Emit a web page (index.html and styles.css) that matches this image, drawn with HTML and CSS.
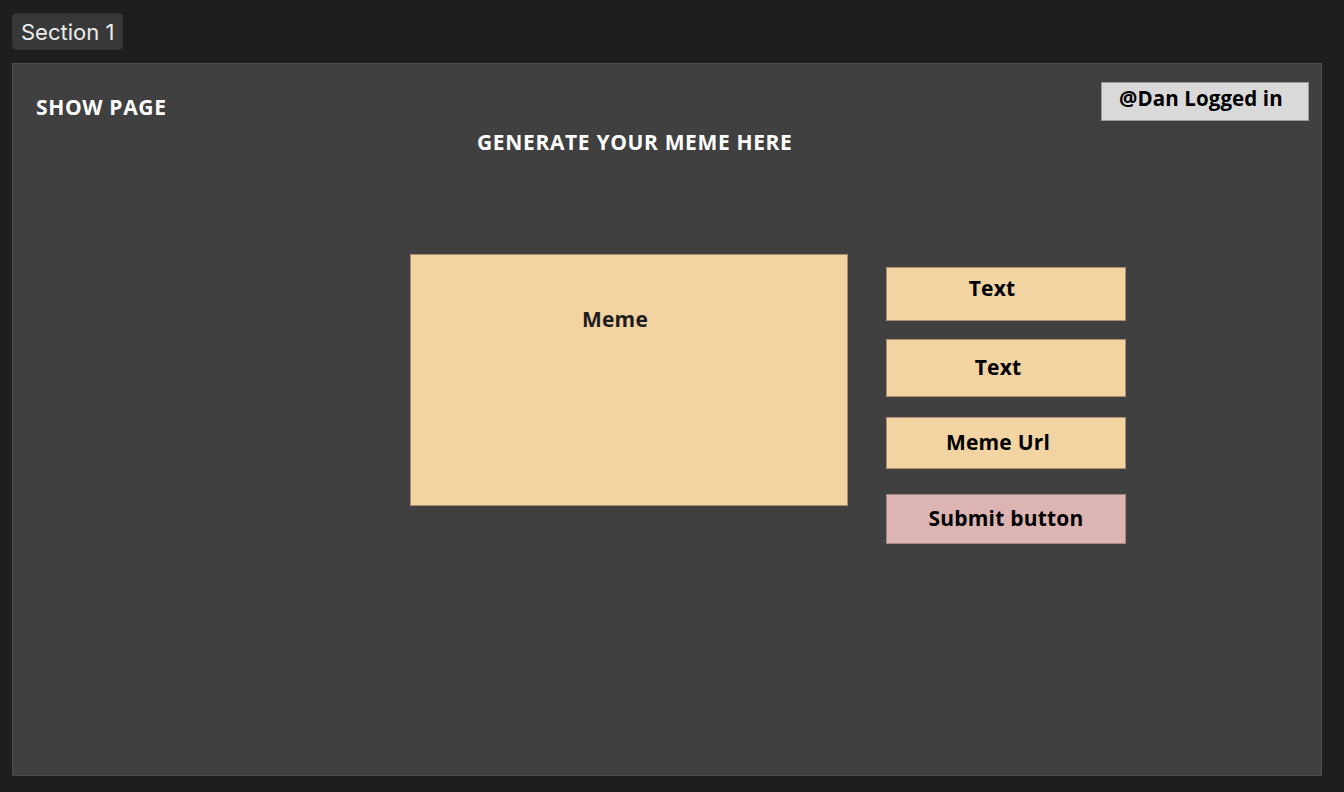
FILE: index.html
```html
<!DOCTYPE html>
<html>
<head>
<meta charset="utf-8">
<link rel="stylesheet" href="styles.css">
</head>
<body>
<div class="tab">Section 1</div>
<div class="frame">
  <div class="header">
    <div class="title">SHOW PAGE</div>
    <div class="badge">@Dan Logged in</div>
  </div>
  <div class="subtitle">GENERATE YOUR MEME HERE</div>
  <div class="content">
    <div class="meme"><span class="meme-label">Meme</span></div>
    <div class="fields">
      <div class="field f1">Text</div>
      <div class="field f2">Text</div>
      <div class="field f3">Meme Url</div>
      <div class="field submit">Submit button</div>
    </div>
  </div>
</div>
</body>
</html>
```
FILE: styles.css
```css
html, body {
  margin: 0;
  padding: 0;
  background: #1e1e1e;
}
body {
  padding: 13px 12px 0 12px;
  width: 1310px;
  font-family: "Open Sans", "Liberation Sans", sans-serif;
}
.tab {
  display: inline-flex;
  align-items: center;
  height: 37px;
  box-sizing: border-box;
  padding: 0 8px;
  background: #383838;
  border: 1px solid #333;
  border-radius: 4px;
  color: #ececec;
  font-family: Inter, "Noto Sans", sans-serif;
  font-size: 22px;
}
.frame {
  margin-top: 13px;
  height: 713px;
  box-sizing: border-box;
  background: #404040;
  border: 1px solid #4e4e4e;
  display: flex;
  flex-direction: column;
}
.header {
  display: flex;
  justify-content: space-between;
  align-items: flex-start;
  padding: 18px 12px 0 23px;
  line-height: 28px;
}
.title {
  margin-top: 11px;
  color: #fff;
  font-weight: 700;
  font-size: 21px;
  letter-spacing: 0.65px;
}
.badge {
  width: 208px;
  height: 39px;
  box-sizing: border-box;
  background: #d9d9d9;
  border: 1px solid #9a9a9a;
  color: #000;
  font-weight: 700;
  font-size: 20.5px;
  padding: 1px 0 0 17px;
  letter-spacing: 0.1px;
}
.subtitle {
  margin-top: 7px;
  margin-left: 464px;
  line-height: 28px;
  color: #fff;
  font-weight: 700;
  font-size: 21px;
  letter-spacing: 0.65px;
}
.content {
  display: flex;
  align-items: flex-start;
  margin-top: 98px;
  margin-left: 397px;
}
.meme {
  width: 438px;
  height: 252px;
  box-sizing: border-box;
  background: #f2d3a2;
  border: 1px solid #a89070;
  padding: 50px 0 0 171px;
  line-height: 28px;
}
.meme-label {
  color: #1e1e1e;
  font-weight: 700;
  font-size: 21px;
  letter-spacing: 0.2px;
}
.fields {
  margin-left: 38px;
  margin-top: 13px;
  display: flex;
  flex-direction: column;
}
.field {
  width: 240px;
  box-sizing: border-box;
  background: #f2d3a2;
  border: 1px solid #a89070;
  color: #000;
  font-weight: 700;
  font-size: 21px;
  line-height: 28px;
  letter-spacing: 0.2px;
  display: flex;
  justify-content: center;
}
.f1 { height: 54px; padding: 6px 28px 0 0; }
.f2 { height: 58px; margin-top: 18px; padding: 13px 16px 0 0; }
.f3 { height: 52px; margin-top: 20px; padding: 10px 16px 0 0; }
.submit {
  height: 50px;
  margin-top: 25px;
  padding: 9px 0 0 0;
  background: #dcb5b3;
  border-color: #a08888;
}
```
